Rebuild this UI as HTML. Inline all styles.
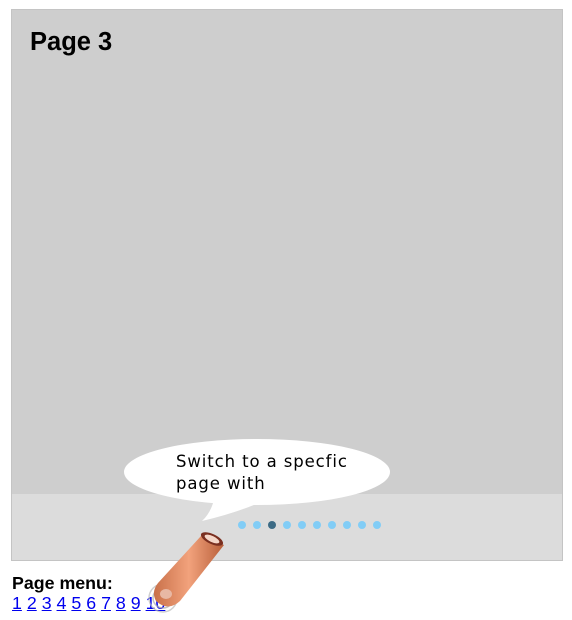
<!DOCTYPE html>
<html><head><style>
body{margin:0;background:#fff;font-family:"Liberation Sans",sans-serif;}
#box{position:absolute;left:11px;top:9px;width:550px;height:550px;background:#cecece;border:1px solid #c4c4c4;}
#bar{position:absolute;left:0;top:484px;width:550px;height:66px;background:#dcdcdc;}
h1{position:absolute;left:18px;top:18px;margin:0;font-size:25.5px;font-weight:bold;color:#000;}
.d{position:absolute;top:511px;width:8px;height:8px;border-radius:50%;background:#82cdf6;}
#menu{position:absolute;left:12px;top:573px;font-size:17.8px;line-height:20px;}
#menu a{color:#00e;text-decoration:underline;}
</style></head><body>
<div id="box"><div id="bar"></div><h1>Page 3</h1>
<div class="d" style="left:226px"></div><div class="d" style="left:241px"></div><div class="d" style="left:256px;background:#3d6b85"></div><div class="d" style="left:271px"></div><div class="d" style="left:286px"></div><div class="d" style="left:301px"></div><div class="d" style="left:316px"></div><div class="d" style="left:331px"></div><div class="d" style="left:346px"></div><div class="d" style="left:361px"></div>
</div>
<div id="menu"><b>Page menu:</b><br><a>1</a> <a>2</a> <a>3</a> <a>4</a> <a>5</a> <a>6</a> <a>7</a> <a>8</a> <a>9</a> <a>10</a></div>
<svg style="position:absolute;left:0;top:0" width="572" height="620">
<defs><linearGradient id="g" x1="0" y1="0" x2="1" y2="0"><stop offset="0" stop-color="#c9714a"/><stop offset=".5" stop-color="#f2a27c"/><stop offset="1" stop-color="#b85f3a"/></linearGradient></defs>
<path d="M215,495 Q212,512 202,521 Q240,512 265,500 Z" fill="#fff"/>
<ellipse cx="257" cy="472" rx="133" ry="33" fill="#fff"/>
<text x="176" y="467" font-family="DejaVu Sans" font-size="16.5" letter-spacing="0.9" fill="#000">Switch to a specfic</text>
<text x="176" y="489" font-family="DejaVu Sans" font-size="16.5" letter-spacing="0.9" fill="#000">page with</text>
<circle cx="163" cy="598" r="14" fill="none" stroke="#bbb" stroke-width="1.5" opacity=".7"/>
<circle cx="163" cy="598" r="10" fill="none" stroke="#aaa" stroke-width="1.5" opacity=".7"/>
<path d="M201,536 L224,545 L180,601 Q168,612 156,601 Q151,592 158,583 Z" fill="url(#g)"/>
<ellipse cx="212" cy="539" rx="12" ry="5" transform="rotate(25 212 539)" fill="#7a2f20"/>
<ellipse cx="212" cy="539" rx="8" ry="3" transform="rotate(25 212 539)" fill="#f4d6c8"/>
<ellipse cx="166" cy="594" rx="6" ry="5" fill="#e8b8a4"/>
</svg>
</body></html>
